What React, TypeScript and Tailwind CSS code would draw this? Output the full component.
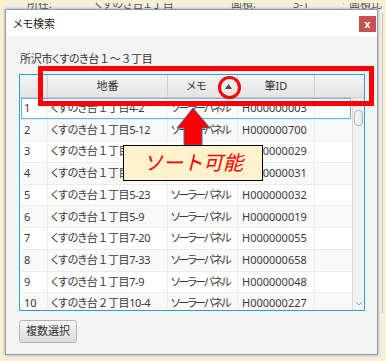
import React from "react";

const FONT = "font-['Noto_Sans','Noto_Sans_CJK_JP',sans-serif] [font-feature-settings:'palt']";

const rows = [
  ["1", "くすのき台１丁目4-2", "ソーラーパネル", "H000000003"],
  ["2", "くすのき台１丁目5-12", "ソーラーパネル", "H000000700"],
  ["3", "くすのき台１丁目5-1", "ソーラーパネル", "H000000029"],
  ["4", "くすのき台１丁目5-3", "ソーラーパネル", "H000000031"],
  ["5", "くすのき台１丁目5-23", "ソーラーパネル", "H000000032"],
  ["6", "くすのき台１丁目5-9", "ソーラーパネル", "H000000019"],
  ["7", "くすのき台１丁目7-20", "ソーラーパネル", "H000000055"],
  ["8", "くすのき台１丁目7-33", "ソーラーパネル", "H000000658"],
  ["9", "くすのき台１丁目7-9", "ソーラーパネル", "H000000048"],
  ["10", "くすのき台２丁目10-4", "ソーラーパネル", "H000000227"],
];

// full-width digits keep their 1em box, the rest stays proportional
function Jp({ text }: { text: string }) {
  return (
    <>
      {text.split(/([０-９～])/).map((part, i) =>
        /^[０-９～]$/.test(part) ? (
          <span key={i} className="[font-feature-settings:normal]">
            {part}
          </span>
        ) : (
          part
        )
      )}
    </>
  );
}

function HeaderRow() {
  return (
    <div className="flex h-[23px] shrink-0 border-b border-[#c9c9c9] bg-gradient-to-b from-[#f4f4f4] to-[#e4e4e4] text-[11px] text-[#333]">
      <div className="w-[28px] border-r border-[#cfcfcf]" />
      <div className="flex w-[120px] items-center justify-center border-r border-[#cfcfcf]">地番</div>
      <div className="flex w-[70px] items-center border-r border-[#cfcfcf]">
        <span className="flex-1 text-center">メモ</span>
        <svg width="7" height="5" viewBox="0 0 7 5" className="mr-[5px]">
          <path d="M0 5 L3.5 0 L7 5 Z" fill="#4a4a4a" />
        </svg>
      </div>
      <div className="flex w-[77px] items-center justify-center border-r border-[#cfcfcf]">筆ID</div>
      <div className="flex-1" />
    </div>
  );
}

function BodyRows() {
  return (
    <div className="flex flex-1 overflow-hidden">
      <div className="flex-1 overflow-hidden">
        {rows.map((r, i) => (
          <div
            key={r[0]}
            className={`relative flex h-[21.7px] items-center border-b border-[#ececec] text-[11px] text-[#3a3a3a] ${
              i % 2 === 1 ? "bg-[#f9f9f9]" : "bg-white"
            }`}
          >
            {i === 0 && <div className="pointer-events-none absolute inset-x-[1px] inset-y-0 border border-[#5fb6e4]" />}
            <div className="flex h-full w-[28px] items-center border-r border-[#ececec] pl-[4px]">{r[0]}</div>
            <div className="flex h-full w-[120px] items-center overflow-hidden whitespace-nowrap border-r border-[#ececec] pl-[3px] tracking-[-0.4px]">
              <Jp text={r[1]} />
            </div>
            <div className="flex h-full w-[70px] items-center overflow-hidden whitespace-nowrap border-r border-[#ececec] pl-[3px] tracking-[-1.8px]">{r[2]}</div>
            <div className="flex h-full w-[77px] items-center overflow-hidden whitespace-nowrap border-r border-[#ececec] pl-[4px]">{r[3]}</div>
            <div className="flex-1" />
          </div>
        ))}
      </div>
      <div className="flex w-[12px] flex-col items-center border-l border-[#dadada] bg-[#f2f2f2]">
        <svg width="8" height="5" viewBox="0 0 8 5" className="mt-[4px]">
          <path d="M1 4 L4 1 L7 4" fill="none" stroke="#9a9a9a" strokeWidth="1" />
        </svg>
        <div className="mt-[3px] h-[16px] w-[9px] rounded-[4px] border border-[#b3b3b3] bg-gradient-to-r from-[#fafafa] to-[#e6e6e6]" />
        <div className="flex-1" />
        <svg width="8" height="5" viewBox="0 0 8 5" className="mb-[4px]">
          <path d="M1 1 L4 4 L7 1" fill="none" stroke="#9a9a9a" strokeWidth="1" />
        </svg>
      </div>
    </div>
  );
}

export default function App() {
  return (
    <div className={`relative h-[361px] w-[386px] overflow-hidden bg-[#fcefc9] p-[3px] ${FONT}`}>
      <div className="relative h-full w-full overflow-hidden bg-[#efefef] pl-[2px] pt-[6px]">
        {/* background window peeking out */}
        <div className="absolute left-[24px] top-[-7px] text-[11px] text-[#555]">所在:</div>
        <div className="absolute left-[92px] top-[-7px] text-[11px] text-[#555]">くすのき台１丁目</div>
        <div className="absolute left-[228px] top-[-7px] text-[11px] text-[#555]">面積:</div>
        <div className="absolute left-[290px] top-[-7px] text-[11px] text-[#555]">3-1</div>
        <div className="absolute left-[340px] top-[-7px] h-[8px] border-l border-[#bbb]" />
        <div className="absolute left-[346px] top-[-7px] text-[11px] text-[#555]">面積比</div>
        <div className="absolute right-[0px] top-[10px] h-[300px] border-l border-[#c4c4c4]" />

        <div className="relative flex h-[346px] w-[373px] flex-col border border-[#9a9a9a] shadow-[0_0_3px_rgba(0,0,0,0.35)]">
          <div className="flex h-[26px] shrink-0 items-start justify-between bg-white">
            <span className="pl-[7px] pt-[6px] text-[11px] text-[#222]">メモ検索</span>
            <div className="mr-[1px] mt-[6px] flex h-[16px] w-[17px] items-center justify-center bg-[#c75050] text-[10px] font-bold leading-none text-white">
              x
            </div>
          </div>
          <div className="flex flex-1 flex-col bg-[#f4f4f4] px-[13px] pt-[14px]">
            <div className="h-[17px] pl-[1px] text-[11px] leading-[17px] tracking-[-0.3px] text-[#333]">
              <Jp text="所沢市くすのき台１～３丁目" />
            </div>
            <div className="mt-[7px] flex h-[237px] w-[346px] flex-col border border-[#2b9fd9] bg-white shadow-[inset_0_0_0_1px_#a9d9f2]">
              <HeaderRow />
              <BodyRows />
            </div>
            <div className="mt-[9px] flex h-[23px] w-[58px] items-center justify-center rounded-[3px] border border-[#b4b4b4] bg-gradient-to-b from-[#f8f8f8] to-[#dcdcdc] text-[11px] text-[#333]">
              複数選択
            </div>
          </div>
        </div>
      </div>

      {/* annotations */}
      <div className="absolute left-[38px] top-[66px] z-20 h-[40px] w-[336px] border-[5px] border-[#ff0000]" />
      <div className="absolute left-[218px] top-[76px] z-20 h-[23px] w-[23px] rounded-full border-[3px] border-[#ff0000]" />
      <svg className="absolute left-[175px] top-[106px] z-20" width="38" height="40" viewBox="0 0 38 40">
        <path d="M18 2 L35 22 L27 22 L27 39 L9 39 L9 22 L2 22 Z" fill="#ff0000" stroke="#41719c" strokeWidth="1" />
      </svg>
      <div className="absolute left-[123px] top-[145px] z-20 flex h-[36px] w-[140px] items-center justify-center border-[1.5px] border-black bg-[#fff2cc] text-[20px] italic text-[#ff0000] [font-feature-settings:normal]">
        ソート可能
      </div>
    </div>
  );
}
